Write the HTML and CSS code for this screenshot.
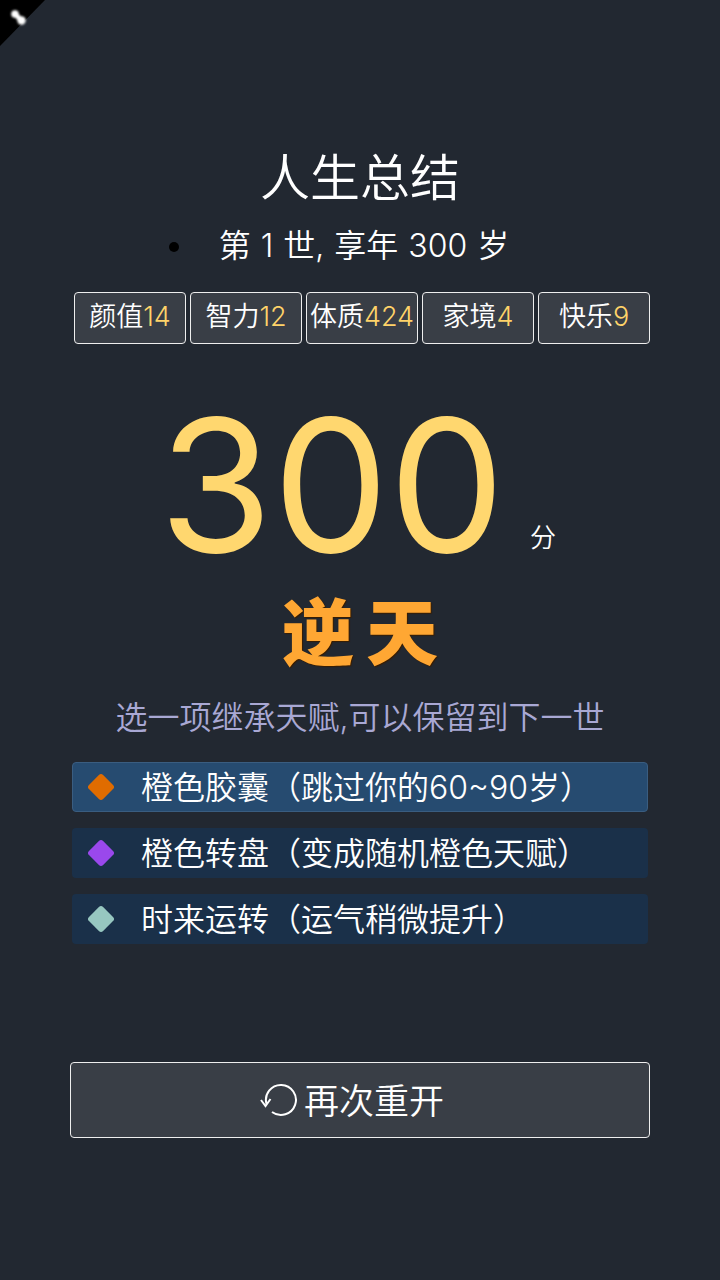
FILE: index.html
```html
<!DOCTYPE html>
<html lang="en">
<head>
    <meta charset="UTF-8">
    <meta name="viewport" content="width=device-width, initial-scale=1.0">
    <title>人生总结</title>
    <link rel="stylesheet" href="styles.css">
</head>
<body>
    <svg class="corner" width="46" height="46" viewBox="0 0 46 46">
        <polygon points="0,0 45,0 0,46" fill="#000"/>
        <g class="cornerMark" fill="#fff" stroke="#fff">
            <circle cx="15" cy="14" r="3.8" stroke="none"/>
            <circle cx="21.5" cy="20.5" r="4.2" stroke="none"/>
            <line x1="15" y1="14" x2="21.5" y2="20.5" stroke-width="5"/>
        </g>
    </svg>

    <div class="page">
        <h1 class="title">人生总结</h1>
        <ul class="lifeInfo">
            <li>第 1 世, 享年 300 岁</li>
        </ul>

        <div class="tags">
            <div class="tag">颜值<span class="num">14</span></div>
            <div class="tag">智力<span class="num">12</span></div>
            <div class="tag">体质<span class="num">424</span></div>
            <div class="tag">家境<span class="num">4</span></div>
            <div class="tag">快乐<span class="num">9</span></div>
        </div>

        <div class="score">
            <span class="scoreNum">300</span>
            <span class="scoreUnit">分</span>
        </div>

        <div class="grade"><span>逆</span><span>天</span></div>

        <p class="hint">选一项继承天赋,可以保留到下一世</p>

        <div class="talents">
            <div class="talent selected">
                <i class="gem orange"></i>
                <span>橙色胶囊（跳过你的60~90岁）</span>
            </div>
            <div class="talent">
                <i class="gem purple"></i>
                <span>橙色转盘（变成随机橙色天赋）</span>
            </div>
            <div class="talent">
                <i class="gem teal"></i>
                <span>时来运转（运气稍微提升）</span>
            </div>
        </div>

        <button class="again">
            <svg width="38" height="36" viewBox="0 0 38 36" fill="none" stroke="#fff" stroke-width="2">
                <path d="M6.5 22 A15 15 0 1 1 12 30"/>
                <path d="M1 18 L5.5 24 L10.5 17" stroke-width="2"/>
            </svg>
            <span>再次重开</span>
        </button>
    </div>
</body>
</html>
```

FILE: styles.css
```css
*{
    box-sizing: border-box;
}
body{
    margin: 0;
    background-color: #222831;
    color: #fff;
    font-family: Inter, "Noto Sans CJK SC", sans-serif;
    font-weight: 350;
}
.corner{
    position: absolute;
    top: 0;
    left: 0;
}
.cornerMark{
    filter: blur(1.2px);
}
.page{
    width: 720px;
    height: 1280px;
    padding-top: 146px;
    display: flex;
    flex-direction: column;
    align-items: center;
}
.title{
    margin: 0;
    font-size: 50px;
    line-height: 64px;
    font-weight: 350;
}
.lifeInfo{
    align-self: flex-start;
    width: 336px;
    margin: 13px 0 0 196px;
    padding: 0;
    font-size: 32px;
    line-height: 46px;
    word-spacing: 1px;
    text-align: center;
    white-space: nowrap;
}
.lifeInfo li::marker{
    color: #000;
}
.tags{
    display: flex;
    gap: 4px;
    margin-top: 23px;
    margin-left: 4px;
}
.tag{
    width: 112px;
    height: 52px;
    padding-bottom: 3px;
    display: flex;
    align-items: center;
    justify-content: center;
    background-color: #393e46;
    border: 1px solid #eeeeee;
    border-radius: 4px;
    font-size: 27px;
    line-height: 40px;
}
.num{
    color: #ffd369;
}
.score{
    display: flex;
    align-items: flex-end;
    margin-top: 46px;
    margin-right: 5px;
    height: 190px;
}
.scoreNum{
    font-size: 184px;
    font-weight: 370;
    line-height: 190px;
    color: #ffd76f;
}
.scoreUnit{
    font-size: 26px;
    line-height: 34px;
    margin-left: 25px;
    margin-bottom: 25px;
}
.grade{
    display: flex;
    gap: 12px;
    margin-top: 11px;
    height: 84px;
    font-size: 72px;
    line-height: 84px;
    font-weight: 900;
    color: #ffa733;
    text-shadow: 1px 1px 1px #3a1d00;
}
.hint{
    margin: 21px 0 0;
    font-size: 32px;
    line-height: 44px;
    color: #a9a8d4;
}
.talents{
    display: flex;
    flex-direction: column;
    gap: 16px;
    width: 576px;
    margin-top: 22px;
}
.talent{
    height: 50px;
    display: flex;
    align-items: center;
    padding: 0 0 0 19px;
    gap: 29px;
    background-color: #1a3049;
    border-radius: 4px;
    font-size: 32px;
}
.talent span{
    margin-bottom: 5px;
}
.talent.selected{
    background-color: #264b70;
    border: 1px solid #3a5d80;
    padding-left: 18px;
}
.gem{
    width: 20px;
    height: 20px;
    margin: 0 1px 0 0;
    border-radius: 3px;
    transform: rotate(45deg);
}
.orange{
    background-color: #e06c00;
}
.purple{
    background-color: #9a48ec;
}
.teal{
    background-color: #97c7c0;
}
.again{
    width: 580px;
    height: 76px;
    margin-top: 118px;
    padding: 0 16px 0 0;
    display: flex;
    align-items: center;
    justify-content: center;
    gap: 6px;
    background-color: #393e46;
    border: 1px solid #eee;
    border-radius: 4px;
    color: #fff;
    font-family: inherit;
    font-size: 35px;
    font-weight: 350;
}
.again span{
    margin-bottom: 4px;
}
```
